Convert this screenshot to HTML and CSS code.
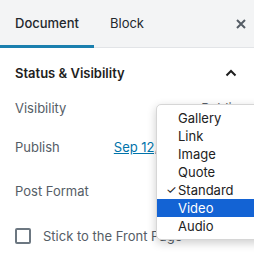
FILE: index.html
```html
<!DOCTYPE html>
<html lang="en">
<head>
  <meta charset="UTF-8" />
  <title>Document Settings</title>
  <link rel="stylesheet" href="styles.css">
</head>
<body>
  <div class="tabs">
    <div class="tab active">Document</div>
    <div class="tab">Block</div>
    <button class="close-btn" aria-label="Close">
      <svg width="10" height="10" viewBox="0 0 10 10"><path d="M1 1L9 9M9 1L1 9" stroke="#555d66" stroke-width="2" fill="none"/></svg>
    </button>
  </div>

  <div class="panel">
    <div class="panel-title">
      Status &amp; Visibility
      <svg width="12" height="8" viewBox="0 0 12 8"><path d="M1.5 6.5L6 2L10.5 6.5" stroke="#1e1e1e" stroke-width="2" fill="none"/></svg>
    </div>

    <div class="row row-visibility">
      <span>Visibility</span>
      <span class="value">Public</span>
    </div>
    <div class="row row-publish">
      <span>Publish</span>
      <a class="date-link" href="#">Sep 12, 2019 2:42 pm</a>
    </div>
    <div class="row row-format">
      <span>Post Format</span>
    </div>
    <label class="row row-sticky">
      <span class="checkbox"></span>
      <span>Stick to the Front Page</span>
    </label>
  </div>

  <!-- open native select menu -->
  <ul class="format-menu">
    <li>Gallery</li>
    <li>Link</li>
    <li>Image</li>
    <li>Quote</li>
    <li class="checked">Standard</li>
    <li class="selected">Video</li>
    <li>Audio</li>
  </ul>
</body>
</html>
```

FILE: styles.css
```css
* { box-sizing: border-box; }
body {
  margin: 0;
  width: 254px;
  height: 265px;
  overflow: hidden;
  font-family: Inter, 'Noto Sans', sans-serif;
  font-size: 13px;
  color: #1e1e1e;
  background: #fff;
  position: relative;
}

.tabs {
  display: flex;
  height: 48px;
  background: #f3f4f5;
  border-bottom: 1px solid #e2e4e7;
}

.tab {
  padding: 0 16px;
  line-height: 47px;
  color: #23282d;
}

.tab.active {
  padding: 0 15px;
  font-weight: 500;
  border-bottom: 3px solid #1a7fae;
  margin-bottom: -1px;
}

.close-btn {
  margin-left: auto;
  width: 40px;
  background: none;
  border: none;
  padding: 0 8px 0 0;
  display: flex;
  align-items: center;
  justify-content: flex-end;
}

.panel { padding: 0 15px; }

.panel-title {
  height: 50px;
  display: flex;
  align-items: center;
  justify-content: space-between;
  font-weight: 600;
  padding-right: 2px;
}

.row {
  display: flex;
  align-items: center;
  justify-content: space-between;
  height: 22px;
  color: #555d66;
}

.row-visibility { height: 20px; margin-top: 0; }
.row-publish { margin-top: 18px; justify-content: flex-start; }
.row-publish .date-link { margin-left: 54px; white-space: nowrap; }
.row-format { margin-top: 18px; height: 30px; }
.row-sticky { margin-top: 20px; height: 20px; justify-content: flex-start; gap: 12px; }

.date-link { color: #0073aa; }

.checkbox {
  width: 16px;
  height: 16px;
  border: 2px solid #6c7781;
  border-radius: 2px;
}

.format-menu {
  position: absolute;
  left: 156px;
  top: 104px;
  width: 110px;
  margin: 0;
  padding: 4px 0;
  list-style: none;
  background: #fff;
  border: 1px solid #d6d6d6;
  border-radius: 5px;
  box-shadow: 0 3px 10px rgba(0, 0, 0, 0.2);
  color: #222;
}

.format-menu li {
  height: 18px;
  line-height: 18px;
  padding-left: 21px;
  position: relative;
}

.format-menu li.checked::before {
  content: '✓';
  position: absolute;
  left: 9px;
  font-size: 12px;
}

.format-menu li.selected {
  background: #1363d4;
  color: #fff;
}
```
